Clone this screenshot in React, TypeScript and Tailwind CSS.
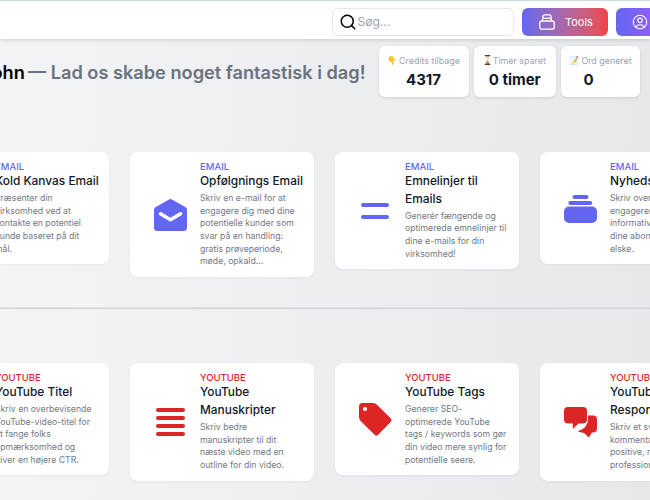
import { Search } from "lucide-react";
import { HiOutlineUserCircle } from "react-icons/hi2";
import type { ReactNode } from "react";

const EnvelopeIcon = () => (
  <svg width="33" height="32" viewBox="0 0 33 32">
    <path d="M14.6.7 Q16.5-.5 18.4.7 L31.6 8.2 Q33 9 33 11 V28.5 Q33 32 29.5 32 H3.5 Q0 32 0 28.5 V11 Q0 9 1.4 8.2 Z" fill="#6366f1" />
    <path d="M6.5 14.8 L16.5 20.8 L26.5 14.8" fill="none" stroke="#fff" strokeWidth="3.6" strokeLinecap="round" strokeLinejoin="round" />
  </svg>
);
const Bars2Icon = () => (
  <svg width="28" height="16" viewBox="0 0 28 16" fill="#6366f1">
    <rect x="0" y="0" width="28" height="4" rx="2" />
    <rect x="0" y="12" width="28" height="4" rx="2" />
  </svg>
);
const StackIcon = () => (
  <svg width="33" height="28" viewBox="0 0 33 28" fill="#6366f1">
    <rect x="8.5" y="0" width="16" height="4" rx="2" />
    <rect x="4.3" y="6" width="24" height="4" rx="2" />
    <rect x="0" y="11.5" width="33" height="16.5" rx="5" />
  </svg>
);
const Bars4Icon = () => (
  <svg width="29" height="28" viewBox="0 0 29 28" fill="#dc2626">
    <rect x="0" y="0" width="29" height="4" rx="2" />
    <rect x="0" y="8" width="29" height="4" rx="2" />
    <rect x="0" y="16" width="29" height="4" rx="2" />
    <rect x="0" y="24" width="29" height="4" rx="2" />
  </svg>
);
const TagIcon = () => (
  <svg width="33" height="33" viewBox="0 0 33 33">
    <path d="M3.5 0 H14 Q16.3 0 18 1.8 L31.6 15.2 Q33.4 17 31.6 18.9 L19.4 31.6 Q17.5 33.6 15.6 31.7 L1.6 18 Q0 16.5 0 14 V3.5 Q0 0 3.5 0 Z" fill="#dc2626" />
    <circle cx="6" cy="6" r="2.1" fill="#fff" />
  </svg>
);
const ChatIcon = () => (
  <svg width="33" height="31" viewBox="0 0 33 31">
    <path d="M24 8.5 H29 Q33 8.5 33 12.5 V21 Q33 25.5 29 25.5 H28 L24.8 30.5 L20 26 L13.5 24.5 Q24 21 24 12 Z" fill="#dc2626" />
    <path d="M4 0 H19 Q23 0 23 4 V12.5 Q23 16.5 19 16.5 H14.5 L8.8 22 V16.5 H4 Q0 16.5 0 12.5 V4 Q0 0 4 0 Z" fill="#dc2626" />
  </svg>
);
const ToolsIcon = () => (
  <svg width="16" height="16" viewBox="0 0 16 16" fill="none" stroke="#fff" strokeWidth="1.3">
    <path d="M3.4 7 L4 2.2 Q4.2 0.8 5.6 0.8 H10.4 Q11.8 0.8 12 2.2 L12.6 7" />
    <path d="M3.2 4.3 H12.8" />
    <rect x="0.8" y="7" width="14.4" height="8.2" rx="2.2" />
  </svg>
);
const HourglassIcon = () => (
  <svg width="7" height="10" viewBox="0 0 7 10">
    <path d="M1.2 1 H5.8 V2.6 L4 5 L5.8 7.4 V9 H1.2 V7.4 L3 5 L1.2 2.6 Z" fill="#e3dcd2" />
    <path d="M2 7.8 L3.5 5.6 L5 7.8 V9 H2 Z" fill="#b9875a" />
    <rect x="0.6" y="0" width="5.8" height="1.2" rx="0.4" fill="#5f3f26" />
    <rect x="0.6" y="8.8" width="5.8" height="1.2" rx="0.4" fill="#5f3f26" />
  </svg>
);

type Card = { icon: ReactNode; title: string; desc: string };

const email: Card[] = [
  { icon: <EnvelopeIcon />, title: "Kold Kanvas Email", desc: "Præsenter din virksomhed ved at kontakte en potentiel kunde baseret på dit mål." },
  { icon: <EnvelopeIcon />, title: "Opfølgnings Email", desc: "Skriv en e-mail for at engagere dig med dine potentielle kunder som svar på en handling: gratis prøveperiode, møde, opkald..." },
  { icon: <Bars2Icon />, title: "Emnelinjer til Emails", desc: "Generér fængende og optimerede emnelinjer til dine e-mails for din virksomhed!" },
  { icon: <StackIcon />, title: "Nyhedsbreve", desc: "Skriv overbevisende og engagerende og informative e-mails til dine abonnenter, de vil elske." },
];
const youtube: Card[] = [
  { icon: <Bars4Icon />, title: "YouTube Titel", desc: "Skriv en overbevisende YouTube-video-titel for at fange folks opmærksomhed og giver en højere CTR." },
  { icon: <Bars4Icon />, title: "YouTube Manuskripter", desc: "Skriv bedre manuskripter til dit næste video med en outline for din video." },
  { icon: <TagIcon />, title: "YouTube Tags", desc: "Generer SEO-optimerede YouTube tags / keywords som gør din video mere synlig for potentielle seere." },
  { icon: <ChatIcon />, title: "YouTube Responser", desc: "Skriv et svar på kommentarer, både positive, negative og professionelt." },
];

function CardView({ card, label, accent }: { card: Card; label: string; accent: "indigo" | "red" }) {
  return (
    <div className="flex w-[184.5px] shrink-0 items-center rounded-lg bg-white pb-[9px] pl-[24px] pr-[9px] pt-[10px] shadow-[0_1px_3px_rgba(0,0,0,0.05)]">
      <div className="mr-[13.5px] flex w-[33px] shrink-0 justify-center">{card.icon}</div>
      <div className="min-w-0 flex-1">
        <div className={`text-[9.5px] font-medium leading-[10px] ${accent === "indigo" ? "text-[#6366f1]" : "text-[#dc2626]"}`}>{label}</div>
        <div className="mb-[2.3px] text-[11.9px] font-medium leading-[17.75px] text-[#111827]">{card.title}</div>
        <div className="max-w-[101.5px] text-[8.7px] leading-[12.67px] text-[#737884]">{card.desc}</div>
      </div>
    </div>
  );
}

function Stat({ emoji, label, value, w, valueClass = "" }: { emoji: ReactNode; label: string; value: string; w: string; valueClass?: string }) {
  return (
    <div className={`flex h-[50.5px] flex-col items-center rounded-md bg-white pt-[7.5px] shadow-[0_1px_3px_rgba(0,0,0,0.12)] ${w}`}>
      <div className="flex items-center gap-[2px] text-[8.9px] leading-[13px] text-[#9ca3af]">
        <span className="text-[8px]">{emoji}</span>
        <span>{label}</span>
      </div>
      <div className={`mt-[3px] text-[15px] font-bold leading-[20px] text-[#111827] ${valueClass}`}>{value}</div>
    </div>
  );
}

export default function App() {
  return (
    <div className="h-[500px] w-[650px] overflow-hidden bg-gradient-to-r from-[#f3f4f6] to-[#e7e8ec] font-['Inter',sans-serif]">
      <header className="flex h-[39px] items-center gap-[8px] border-t border-t-[#c6dcdf] bg-white pl-[332px] pt-[4px] shadow-[0_1px_4px_rgba(0,0,0,0.15)]">
        <div className="flex h-[28px] w-[182px] shrink-0 items-center gap-[1px] rounded-md border border-[#e5e7eb] bg-white pl-[5.5px]">
          <Search size={18} strokeWidth={2} className="text-black" />
          <span className="text-[12px] text-[#9ca3af]">Søg...</span>
        </div>
        <div className="flex h-[28px] w-[85.5px] shrink-0 items-center gap-[10px] rounded-md bg-gradient-to-r from-[#6366f1] to-[#ef4444] pl-[17px] text-[11px] text-white">
          <ToolsIcon />
          <span>Tools</span>
        </div>
        <div className="flex h-[28px] w-[60px] shrink-0 items-center rounded-md bg-gradient-to-r from-[#6366f1] to-[#a855f7] pl-[15px] text-white">
          <HiOutlineUserCircle className="text-[18px]" />
        </div>
      </header>

      <div className="flex h-[71px] items-start justify-end gap-[13px] pr-[10px] pt-[7px]">
        <h1 className="mt-[13px] whitespace-nowrap text-[18.2px] font-semibold leading-[26px] text-[#6b7280]">
          <span className="mr-[-1.5px] text-black">John</span> — Lad os skabe noget fantastisk i dag!
        </h1>
        <div className="flex shrink-0 gap-[5px]">
          <Stat w="w-[90px]" label="Credits tilbage" value="4317" emoji="👇" />
          <Stat w="w-[82.5px]" label="Timer sparet" value="0 timer" emoji={<HourglassIcon />} />
          <Stat w="w-[79px]" label="Ord generet" value="0" emoji="📝" valueClass="pr-[24px]" />
        </div>
      </div>

      <div className="-ml-[75.5px] mt-[42px] flex items-start gap-[20.5px]">
        {email.map((c) => <CardView key={c.title} card={c} label="EMAIL" accent="indigo" />)}
      </div>

      <div className="mt-[30px] h-[2px] w-full border-b border-t border-b-[#d2d3d8] border-t-[#e0e1e5]" />

      <div className="-ml-[75.5px] mt-[54px] flex items-start gap-[20.5px]">
        {youtube.map((c) => <CardView key={c.title} card={c} label="YOUTUBE" accent="red" />)}
      </div>
    </div>
  );
}
